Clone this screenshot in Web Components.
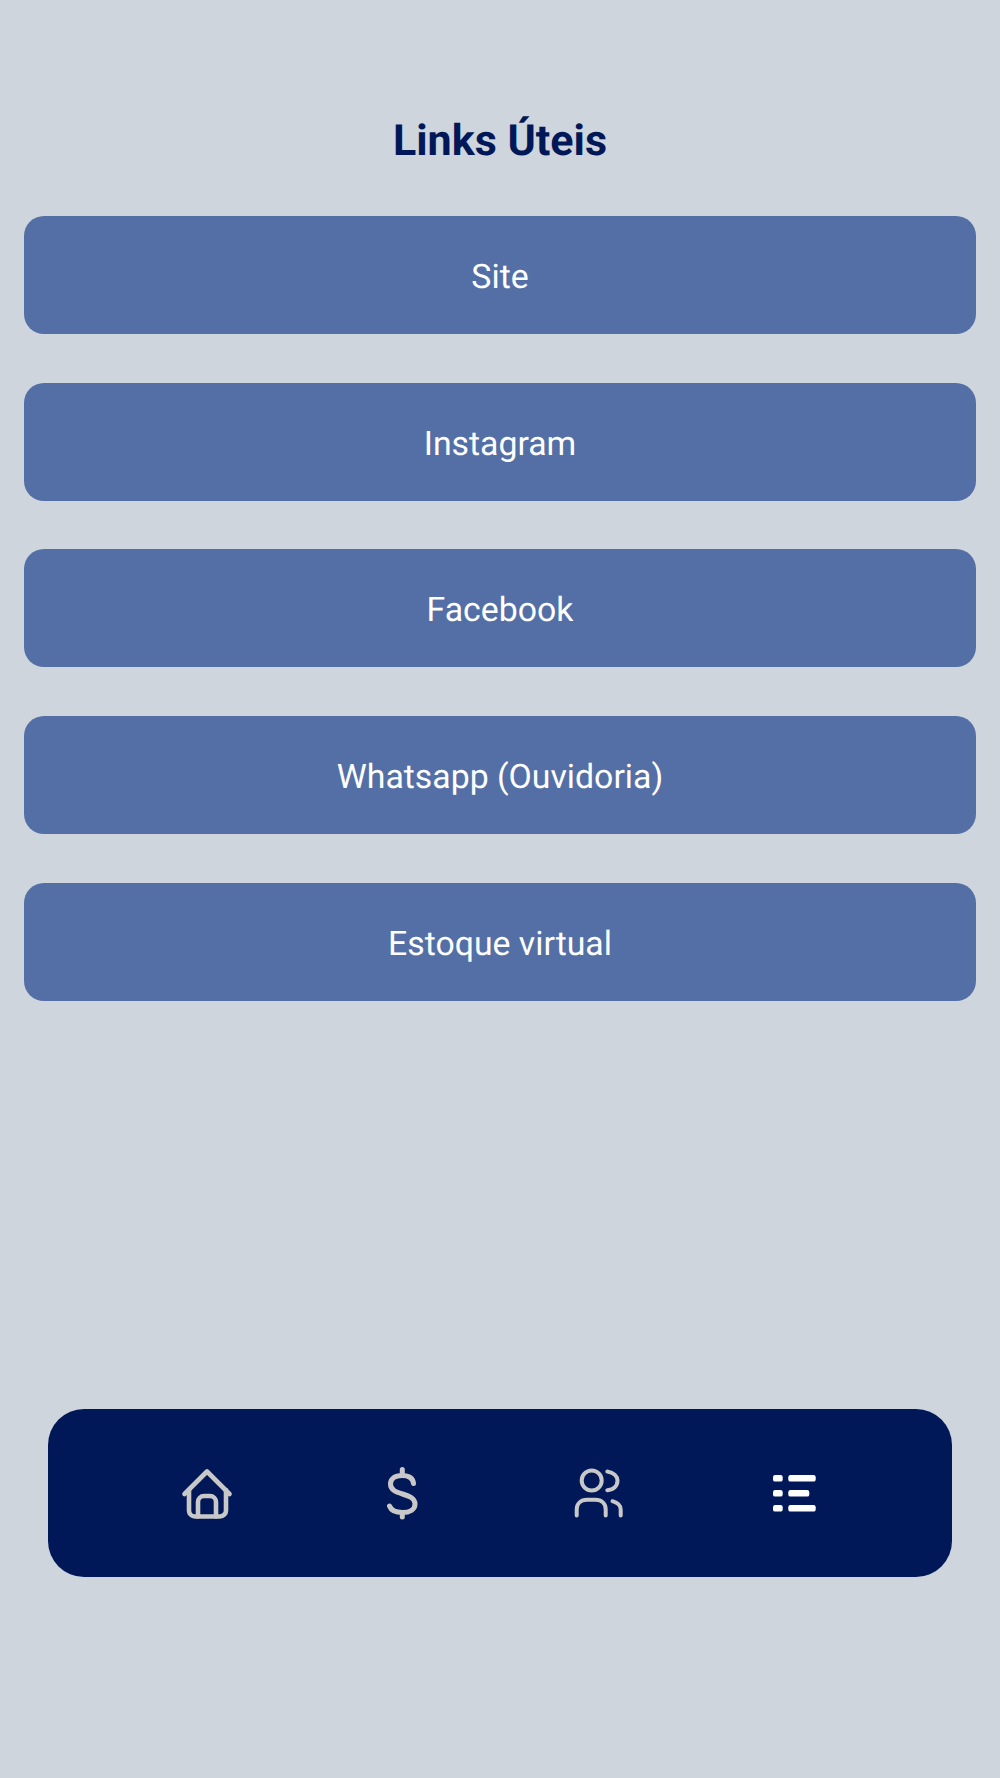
<!DOCTYPE html>
<html lang="pt-BR">
<head>
<meta charset="utf-8">
<title>Links Úteis</title>
<style>
    html, body { margin: 0; background: #ced5dd; }
    body { font-family: Roboto, "Liberation Sans", sans-serif; text-rendering: geometricPrecision; }
</style>
</head>
<body>
<links-page>
    <span slot="title">Links Úteis</span>
    <link-button>Site</link-button>
    <link-button>Instagram</link-button>
    <link-button>Facebook</link-button>
    <link-button>Whatsapp (Ouvidoria)</link-button>
    <link-button>Estoque virtual</link-button>
    <bottom-nav slot="nav">
        <nav-item label="Início">
            <svg viewBox="0 0 60 60" width="60" height="60" fill="none" stroke="currentColor" stroke-width="4.6" stroke-linecap="round" stroke-linejoin="round">
                <path d="M8.5 31 L31 8.5 L53.5 31"/>
                <path d="M13 27 V47.5 a6 6 0 0 0 6 6 H44 a6 6 0 0 0 6 -6 V27"/>
                <path d="M22 53.5 V39 a6 6 0 0 1 6 -6 h6 a6 6 0 0 1 6 6 V53.5"/>
            </svg>
        </nav-item>
        <nav-item label="Financeiro">
            <svg viewBox="0 0 60 60" width="60" height="60" fill="none" stroke="currentColor" stroke-width="5" stroke-linecap="round" stroke-linejoin="round">
                <path d="M30.3 6.5 V12 M30.3 49.5 V54"/>
                <path d="M41.5 20.5 C41 15.5 37 12.5 30 12.5 C23 12.5 18.5 15.5 18.5 21 C18.5 27 24 29 30.5 31 C37 33 43 35 43 41 C43 46.5 37.5 49.5 30.5 49.5 C23.5 49.5 19 47 17.5 43"/>
            </svg>
        </nav-item>
        <nav-item label="Usuários">
            <svg viewBox="0 0 60 60" width="60" height="60" fill="none" stroke="currentColor" stroke-width="4" stroke-linecap="round" stroke-linejoin="round">
                <circle cx="23.7" cy="17.5" r="10"/>
                <path d="M39.3 8.5 C46 9.5 49.5 13.5 49.5 17.5 C49.5 22.5 46 26.5 39.3 27.2"/>
                <path d="M8.7 52.5 V46.5 C8.7 40.5 13 36.8 19 36.8 H27.5 C33.5 36.8 37.7 40.5 37.7 46.5 V52.5"/>
                <path d="M44.5 38.2 C49.5 39.7 52.7 42.5 52.7 46.5 V52.5"/>
            </svg>
        </nav-item>
        <nav-item label="Links" active>
            <svg viewBox="0 0 60 60" width="60" height="60" fill="currentColor">
                <rect x="9" y="12" width="9.7" height="6.6" rx="2.2"/>
                <rect x="24.3" y="12" width="27.4" height="6.6" rx="2.2"/>
                <rect x="9" y="27" width="9.7" height="6.6" rx="2.2"/>
                <rect x="24.3" y="27" width="21" height="6.6" rx="2.2"/>
                <rect x="9" y="42" width="9.7" height="6.6" rx="2.2"/>
                <rect x="24.3" y="42" width="27.4" height="6.6" rx="2.2"/>
            </svg>
        </nav-item>
    </bottom-nav>
</links-page>

<script>
class LinksPage extends HTMLElement {
    constructor() {
        super();
        const shadow = this.attachShadow({ mode: 'open' });
        shadow.innerHTML = `
            <style>
                :host {
                    display: block;
                    height: 1778px;
                    box-sizing: border-box;
                    padding: 116px 24px 0;
                    overflow: hidden;
                }
                h1 {
                    margin: 0 0 48px;
                    height: 52px;
                    line-height: 50px;
                    font-size: 43px;
                    font-weight: 700;
                    text-align: center;
                    color: #011858;
                }
                .links {
                    display: flex;
                    flex-direction: column;
                    gap: 48.7px;
                }
                .nav {
                    margin: 408px 24px 0;
                }
            </style>
            <h1><slot name="title"></slot></h1>
            <div class="links"><slot></slot></div>
            <div class="nav"><slot name="nav"></slot></div>
        `;
    }
}

class LinkButton extends HTMLElement {
    constructor() {
        super();
        const shadow = this.attachShadow({ mode: 'open' });
        shadow.innerHTML = `
            <style>
                :host {
                    display: flex;
                    align-items: center;
                    justify-content: center;
                    box-sizing: border-box;
                    height: 118px;
                    padding-top: 5px;
                    border-radius: 20px;
                    background: #536fa6;
                    color: #fff;
                    font-size: 33.8px;
                    cursor: pointer;
                }
            </style>
            <slot></slot>
        `;
    }
}

class BottomNav extends HTMLElement {
    constructor() {
        super();
        const shadow = this.attachShadow({ mode: 'open' });
        shadow.innerHTML = `
            <style>
                :host {
                    display: grid;
                    grid-template-columns: repeat(4, 196px);
                    justify-content: center;
                    align-items: center;
                    height: 168px;
                    border-radius: 36px;
                    background: #011858;
                }
            </style>
            <slot></slot>
        `;
    }
}

class NavItem extends HTMLElement {
    constructor() {
        super();
        const shadow = this.attachShadow({ mode: 'open' });
        shadow.innerHTML = `
            <style>
                :host {
                    display: flex;
                    justify-content: center;
                    color: #c8c8c8;
                    cursor: pointer;
                }
                :host([active]) {
                    color: #fff;
                }
            </style>
            <slot></slot>
        `;
        this.setAttribute('role', 'link');
        this.setAttribute('aria-label', this.getAttribute('label'));
    }
}

customElements.define('links-page', LinksPage);
customElements.define('link-button', LinkButton);
customElements.define('bottom-nav', BottomNav);
customElements.define('nav-item', NavItem);
</script>
</body>
</html>
